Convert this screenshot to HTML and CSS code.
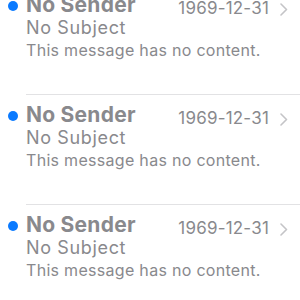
FILE: index.html
```html
<!DOCTYPE html>
<html>
<head>
<meta charset="utf-8">
<link rel="stylesheet" href="styles.css">
</head>
<body>
<div class="list">
  <div class="row">
    <div class="mark"><span class="dot"></span></div>
    <div class="body">
      <div class="top">
        <span class="sender">No Sender</span>
        <span class="date">1969-12-31</span>
        <svg class="chev" width="8" height="13" viewBox="0 0 8 13"><path d="M1 1l5.5 5.5L1 12" fill="none" stroke="#c4c4c7" stroke-width="1.6" stroke-linecap="round" stroke-linejoin="round"/></svg>
      </div>
      <div class="subject">No Subject</div>
      <div class="preview">This message has no content.</div>
    </div>
  </div>
  <div class="row">
    <div class="mark"><span class="dot"></span></div>
    <div class="body">
      <div class="top">
        <span class="sender">No Sender</span>
        <span class="date">1969-12-31</span>
        <svg class="chev" width="8" height="13" viewBox="0 0 8 13"><path d="M1 1l5.5 5.5L1 12" fill="none" stroke="#c4c4c7" stroke-width="1.6" stroke-linecap="round" stroke-linejoin="round"/></svg>
      </div>
      <div class="subject">No Subject</div>
      <div class="preview">This message has no content.</div>
    </div>
  </div>
  <div class="row">
    <div class="mark"><span class="dot"></span></div>
    <div class="body">
      <div class="top">
        <span class="sender">No Sender</span>
        <span class="date">1969-12-31</span>
        <svg class="chev" width="8" height="13" viewBox="0 0 8 13"><path d="M1 1l5.5 5.5L1 12" fill="none" stroke="#c4c4c7" stroke-width="1.6" stroke-linecap="round" stroke-linejoin="round"/></svg>
      </div>
      <div class="subject">No Subject</div>
      <div class="preview">This message has no content.</div>
    </div>
  </div>
</div>
</body>
</html>
```
FILE: styles.css
```css
html, body {
  margin: 0;
  padding: 0;
  background: #ffffff;
  overflow: hidden;
}
body {
  font-family: Inter, "Liberation Sans", sans-serif;
  color: #89898d;
}
.list {
  margin-top: -16px;
}
.row {
  display: flex;
  height: 110px;
}
.mark {
  width: 26px;
  flex: none;
  padding-top: 16.5px;
  box-sizing: border-box;
}
.dot {
  display: block;
  width: 10px;
  height: 10px;
  border-radius: 50%;
  background: #0a7aff;
  margin-left: 8px;
}
.body {
  flex: 1;
  border-top: 1px solid #e2e2e4;
  padding-top: 7.5px;
}
.top {
  display: flex;
  align-items: flex-start;
  height: 24px;
}
.sender {
  font-size: 21px;
  font-weight: 700;
  letter-spacing: 0.25px;
  line-height: 24px;
  flex: 1;
}
.date {
  font-size: 17px;
  letter-spacing: 0.2px;
  line-height: 31px;
  margin-right: 11px;
}
.chev {
  margin-right: 12px;
  margin-top: 10px;
}
.subject {
  font-size: 18px;
  letter-spacing: 0.65px;
  line-height: 21px;
}
.preview {
  font-size: 16px;
  letter-spacing: 0.3px;
  line-height: 25px;
}
```
